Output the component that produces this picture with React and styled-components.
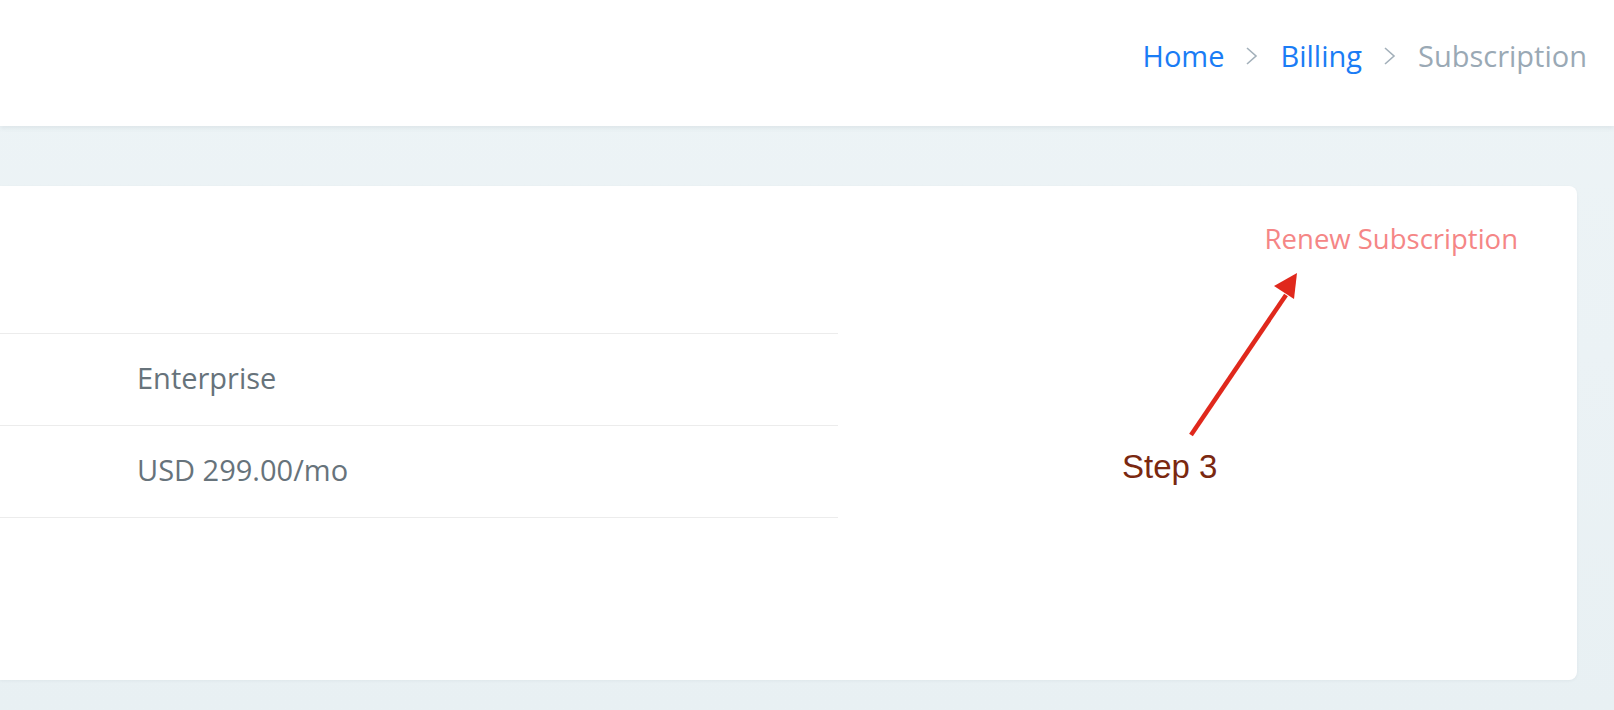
import styled, { createGlobalStyle } from "styled-components";

const GlobalStyle = createGlobalStyle`
  body {
    margin: 0;
    background: #eaf2f5;
    font-family: "Open Sans", "Liberation Sans", sans-serif;
  }
`;

const Page = styled.div`
  position: relative;
  height: 710px;
  overflow: hidden;
  background: linear-gradient(180deg, #edf4f6 0%, #ebf2f5 50%, #e8f0f3 100%);
`;

const Header = styled.header`
  height: 126px;
  background: #ffffff;
  box-shadow: 0 2px 5px rgba(60, 80, 100, 0.09);
  display: flex;
  justify-content: flex-end;
  align-items: flex-start;
  padding: 35px 27px 0 0;
  box-sizing: border-box;
`;

const Crumbs = styled.nav`
  display: flex;
  align-items: center;
  gap: 21px;
  font-size: 29px;
  line-height: 42px;
`;

const Crumb = styled.span`
  color: ${(p) => (p.$active ? "#9aa9b5" : "#1a7cf5")};
`;

const Chevron = styled.svg`
  width: 14px;
  height: 20px;
  display: block;
`;

const Main = styled.main`
  padding: 60px 37px 0 0;
`;

const Card = styled.section`
  position: relative;
  height: 494px;
  background: #ffffff;
  border-radius: 0 8px 8px 0;
  box-shadow: 0 1px 3px rgba(60, 80, 100, 0.06);
`;

const CardTop = styled.div`
  display: flex;
  justify-content: flex-end;
  padding: 33px 59px 0 0;
  height: 147px;
  box-sizing: border-box;
`;

const RenewLink = styled.a`
  color: #f58686;
  font-size: 27.5px;
  line-height: 40px;
  text-decoration: none;
  cursor: pointer;
`;

const Table = styled.div`
  width: 838px;
  border-bottom: 1px solid #ececec;
`;

const Row = styled.div`
  display: grid;
  grid-template-columns: 137px 1fr;
  align-items: center;
  height: 91px;
  border-top: 1px solid #ececec;
`;

const Cell = styled.div`
  color: #67737b;
  font-size: 29px;
  padding-bottom: 5px;
`;

const Annotation = styled.div`
  position: absolute;
  left: 1100px;
  top: 260px;
  width: 220px;
  height: 240px;
  pointer-events: none;
`;

const StepLabel = styled.span`
  position: absolute;
  left: 22px;
  top: 188px;
  font-family: "Liberation Sans", Arial, sans-serif;
  font-size: 33px;
  color: #7a2810;
`;

const ChevronIcon = () => (
  <Chevron viewBox="0 0 14 20">
    <path d="M2 2 L11 10 L2 18" fill="none" stroke="#a3b0ba" strokeWidth="1.6" />
  </Chevron>
);

const rows = [
  { label: "Plan", value: "Enterprise" },
  { label: "Price", value: "USD 299.00/mo" },
];

export default function App() {
  return (
    <Page>
      <GlobalStyle />
      <Header>
        <Crumbs>
          <Crumb>Home</Crumb>
          <ChevronIcon />
          <Crumb>Billing</Crumb>
          <ChevronIcon />
          <Crumb $active>Subscription</Crumb>
        </Crumbs>
      </Header>
      <Main>
        <Card>
          <CardTop>
            <RenewLink>Renew Subscription</RenewLink>
          </CardTop>
          <Table>
            {rows.map((r) => (
              <Row key={r.label}>
                <span />
                <Cell>{r.value}</Cell>
              </Row>
            ))}
          </Table>
        </Card>
      </Main>
      <Annotation>
        <svg width="220" height="240" viewBox="0 0 220 240">
          <line x1="91" y1="175" x2="186" y2="35" stroke="#e0281c" strokeWidth="4.5" />
          <polygon points="197,13 174,26 194,39" fill="#e0281c" />
        </svg>
        <StepLabel>Step 3</StepLabel>
      </Annotation>
    </Page>
  );
}
